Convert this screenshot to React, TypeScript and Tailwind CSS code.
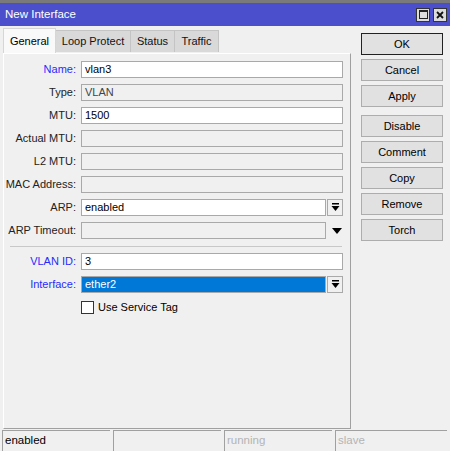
import React from 'react';

const font = { fontFamily: '"Liberation Sans", Arial, sans-serif' };

const ComboArrow = () => (
  <svg width="9" height="9" viewBox="0 0 9 9">
    <rect x="1" y="0" width="7" height="1.5" fill="#000" />
    <path d="M0.5 3 H8.5 L4.5 8 Z" fill="#000" />
  </svg>
);

const DownArrow = () => (
  <svg width="10" height="6" viewBox="0 0 10 6">
    <path d="M0 0 H10 L5 6 Z" fill="#000" />
  </svg>
);

type FieldProps = {
  label: string;
  value?: string;
  blue?: boolean;
  disabled?: boolean;
  selected?: boolean;
  combo?: 'button' | 'arrow';
};

const Field: React.FC<FieldProps> = ({ label, value = '', blue, disabled, selected, combo }) => (
  <div className="flex items-center h-[17px]">
    <div className={`w-[73px] text-right pr-px ${blue ? 'text-[#2a2aff]' : 'text-[#222]'}`}>{label}</div>
    <div className="ml-[4px] flex items-center">
      <div
        className={`h-[17px] border border-[#a9a9a9] flex items-center pl-[3px] ${combo ? 'w-[245px]' : 'w-[262px]'} ${
          selected ? 'bg-[#0078d7] text-white' : disabled ? 'bg-[#f0f0f0] text-[#444]' : 'bg-white text-black'
        }`}
      >
        {value}
      </div>
      {combo === 'button' && (
        <div className="ml-[1px] w-[16px] h-[17px] border border-[#a9a9a9] bg-[#f0f0f0] flex items-center justify-center">
          <ComboArrow />
        </div>
      )}
      {combo === 'arrow' && (
        <div className="ml-[1px] w-[16px] h-[17px] flex items-center justify-center pl-[3px]">
          <DownArrow />
        </div>
      )}
    </div>
  </div>
);

const SideButton: React.FC<{ label: string; primary?: boolean }> = ({ label, primary }) => (
  <div
    className={`h-[22px] w-[82px] flex items-center justify-center bg-[#e1e1e1] text-black border ${
      primary ? 'border-[#222]' : 'border-[#adadad]'
    }`}
  >
    {label}
  </div>
);

const Tab: React.FC<{ label: string; active?: boolean; w: string }> = ({ label, active, w }) =>
  active ? (
    <div className={`${w} h-[25px] bg-[#f9f9f9] border-l border-t border-r border-[#d6d6d6] flex items-center justify-center text-black`}>
      {label}
    </div>
  ) : (
    <div className={`${w} h-[22px] bg-[#d9d9d9] border-t border-r border-[#c4c4c4] flex items-center justify-center text-[#111] mb-px`}>
      {label}
    </div>
  );

export default function App() {
  return (
    <div className="w-[450px] h-[451px] bg-[#f0f0f0] flex flex-col text-[11px] overflow-hidden" style={font}>
      <div className="h-[3px] bg-[#7a7a7a]" />
      <div className="h-[23px] bg-[#4b4fcb] flex items-center justify-between pl-[5px] pr-[3px]">
        <span className="text-white text-[11.5px]">New Interface</span>
        <div className="flex gap-[3px]">
          <div className="w-[14px] h-[14px] bg-[#dcdcdc] border border-[#333] flex items-center justify-center">
            <div className="w-[9px] h-[9px] border border-[#222] border-t-2" />
          </div>
          <div className="w-[14px] h-[14px] bg-[#dcdcdc] border border-[#333] flex items-center justify-center">
            <svg width="8" height="8" viewBox="0 0 8 8">
              <path d="M1 1 L7 7 M7 1 L1 7" stroke="#111" strokeWidth="1.8" />
            </svg>
          </div>
        </div>
      </div>

      <div className="flex flex-1">
        <div className="ml-[3px] w-[348px] flex flex-col">
          <div className="h-[27px] flex items-end">
            <Tab label="General" active w="w-[53px]" />
            <Tab label="Loop Protect" w="w-[75px]" />
            <Tab label="Status" w="w-[44px]" />
            <Tab label="Traffic" w="w-[44px]" />
          </div>
          <div className="h-[376px] border-t border-l border-white border-r border-b border-r-[#a0a0a0] border-b-[#a0a0a0] pt-[7px] flex flex-col">
            <div className="flex flex-col gap-[6px]">
              <Field label="Name:" value="vlan3" blue />
              <Field label="Type:" value="VLAN" disabled />
              <Field label="MTU:" value="1500" />
              <Field label="Actual MTU:" disabled />
              <Field label="L2 MTU:" disabled />
              <Field label="MAC Address:" disabled />
              <Field label="ARP:" value="enabled" combo="button" />
              <Field label="ARP Timeout:" disabled combo="arrow" />
            </div>
            <div className="mt-[7px] mb-[6px] ml-[6px] w-[332px] h-px bg-[#c8c8c8]" />
            <div className="flex flex-col gap-[6px]">
              <Field label="VLAN ID:" value="3" blue />
              <Field label="Interface:" value="ether2" blue selected combo="button" />
            </div>
            <div className="mt-[8px] ml-[77px] flex items-center h-[13px]">
              <div className="w-[13px] h-[13px] bg-white border border-[#333]" />
              <span className="ml-[4px] text-black">Use Service Tag</span>
            </div>
          </div>
        </div>

        <div className="ml-[10px] pt-[7px] flex flex-col">
          <div className="flex flex-col gap-[4px]">
            <SideButton label="OK" primary />
            <SideButton label="Cancel" />
            <SideButton label="Apply" />
          </div>
          <div className="mt-[8px] flex flex-col gap-[4px]">
            <SideButton label="Disable" />
            <SideButton label="Comment" />
            <SideButton label="Copy" />
            <SideButton label="Remove" />
            <SideButton label="Torch" />
          </div>
        </div>
      </div>

      <div className="h-[21px] flex gap-[3px] pl-[2px] pr-[3px]">
        <div className="w-[108px] border-t border-l border-[#a0a0a0] flex items-center pl-[2px] text-black text-[11.5px]">enabled</div>
        <div className="w-[108px] border-t border-l border-[#a0a0a0]" />
        <div className="w-[108px] border-t border-l border-[#a0a0a0] flex items-center pl-[2px] text-[#b4b4b4] text-[11.5px]">running</div>
        <div className="flex-1 border-t border-l border-[#a0a0a0] flex items-center pl-[2px] text-[#b4b4b4] text-[11.5px]">slave</div>
      </div>
    </div>
  );
}
